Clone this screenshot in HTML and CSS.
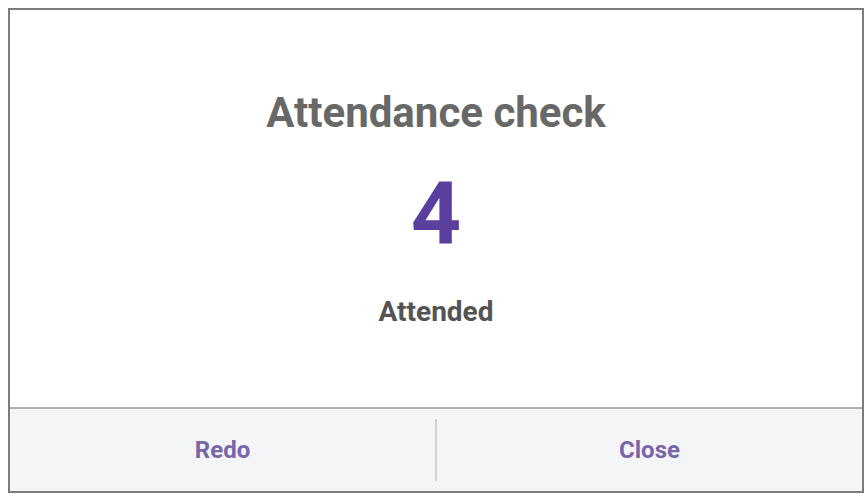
FILE: index.html
```html
<!DOCTYPE html>
<html>
<head>
<meta charset="utf-8">
<link rel="stylesheet" href="styles.css">
</head>
<body>
<div class="dialog">
  <div class="content">
    <h1 class="title">Attendance check</h1>
    <div class="count">4</div>
    <div class="label">Attended</div>
  </div>
  <div class="footer">
    <button class="btn">Redo</button>
    <div class="divider"></div>
    <button class="btn">Close</button>
  </div>
</div>
</body>
</html>
```
FILE: styles.css
```css
html, body { margin: 0; padding: 0; background: #ffffff; }
body { padding: 8px 4px 5px 8px; font-family: Roboto, "Liberation Sans", sans-serif; }
.dialog {
  box-sizing: border-box;
  width: 856px;
  height: 485px;
  border: 2px solid #7c7c7c;
  display: flex;
  flex-direction: column;
  background: #fff;
}
.content {
  flex: 1;
  display: flex;
  flex-direction: column;
  align-items: center;
}
.title {
  margin: 78px 0 0 0;
  font-size: 42px;
  font-weight: 700;
  color: #686868;
  line-height: 49px;
}
.count {
  margin-top: 32px;
  font-size: 88px;
  font-weight: 700;
  color: #5b3f9e;
  line-height: 90px;
}
.label {
  margin-top: 37px;
  font-size: 28px;
  font-weight: 700;
  color: #545454;
  line-height: 32px;
}
.footer {
  height: 82px;
  border-top: 2px solid #b0b0b0;
  background: #f4f5f7;
  display: flex;
  align-items: center;
}
.btn {
  flex: 1;
  border: 0;
  background: transparent;
  font-family: inherit;
  font-size: 24px;
  font-weight: 700;
  color: #7866a9;
  height: 100%;
  padding: 0;
}
.divider {
  width: 2px;
  height: 62px;
  background: #d0d2d5;
}
```
